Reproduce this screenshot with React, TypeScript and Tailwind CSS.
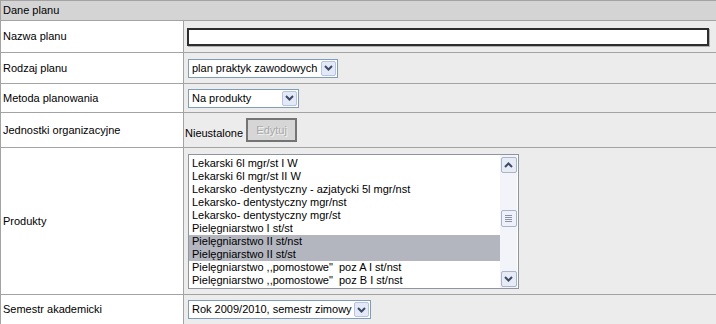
import React from "react";

const products = [
    "Lekarski 6l mgr/st I W",
    "Lekarski 6l mgr/st II W",
    "Lekarsko -dentystyczny - azjatycki 5l mgr/nst",
    "Lekarsko- dentystyczny mgr/nst",
    "Lekarsko- dentystyczny mgr/st",
    "Pielęgniarstwo I st/st",
    "Pielęgniarstwo II st/nst",
    "Pielęgniarstwo II st/st",
    "Pielęgniarstwo ,,pomostowe\"\u00a0 poz A I st/nst",
    "Pielęgniarstwo ,,pomostowe\"\u00a0 poz B I st/nst",
];

const selected = [6, 7];

const Chevron = ({ up = false }: { up?: boolean }) => (
    <svg width="9" height="6" viewBox="0 0 9 6" className={up ? "rotate-180" : ""}>
        <path d="M1 1 L4.5 4.5 L8 1" fill="none" stroke="#3b4a66" strokeWidth="2" />
    </svg>
);

const Select = ({ label, className }: { label: string; className: string }) => (
    <div className={`flex h-[19px] items-stretch border border-[#7f9db9] bg-white ${className}`}>
        <span className="flex-1 truncate pl-[3px] leading-[17px]">{label}</span>
        <span className="m-px flex w-[15px] items-center justify-center rounded-[2px] border border-[#b6c3dd] bg-[#e3e9f6]">
            <Chevron />
        </span>
    </div>
);

const Row = ({
    label,
    children,
    height,
}: {
    label: string;
    children: React.ReactNode;
    height: string;
}) => (
    <div className={`flex border-b border-[#a3a3a3] ${height}`}>
        <div className="flex w-[183px] shrink-0 items-center border-r border-[#a3a3a3] bg-white pl-[2px]">
            {label}
        </div>
        <div className="flex flex-1 items-center bg-[#ececec] pl-[1px]">{children}</div>
    </div>
);

const ScrollButton = ({ up = false }: { up?: boolean }) => (
    <div className="flex h-[16px] w-[16px] items-center justify-center rounded-[2px] border border-[#a9b4c8] bg-[#e6ebf5]">
        <Chevron up={up} />
    </div>
);

const ProductList = () => (
    <div className="ml-[3px] flex h-[135px] w-[331px] border border-[#8f959e] bg-white">
        <div className="flex-1 pt-[2px]">
            {products.map((p, i) => (
                <div
                    key={p}
                    className={`h-[13px] whitespace-nowrap pl-[3px] leading-[13px] ${
                        selected.includes(i) ? "bg-[#b3b5bf]" : ""
                    }`}
                >
                    {p}
                </div>
            ))}
        </div>
        <div className="mr-px flex w-[17px] flex-col items-center bg-[#f3f4fa] pt-[2px] pb-px">
            <ScrollButton up />
            <div className="flex flex-1 flex-col items-center pt-[37px]">
                <div className="flex h-[17px] w-[16px] flex-col items-center justify-center gap-px rounded-[2px] border border-[#a9b4c8] bg-[#eef1f9]">
                    <span className="h-px w-[7px] bg-[#8a93a6]" />
                    <span className="h-px w-[7px] bg-[#8a93a6]" />
                    <span className="h-px w-[7px] bg-[#8a93a6]" />
                    <span className="h-px w-[7px] bg-[#8a93a6]" />
                </div>
            </div>
            <ScrollButton />
        </div>
    </div>
);

const App = () => {
    return (
        <div
            className="h-[324px] w-[716px] overflow-hidden border-t border-l border-[#a3a3a3] bg-[#ececec] text-[11px] text-black"
            style={{ fontFamily: '"Liberation Sans", Arial, sans-serif' }}
        >
            <div className="flex h-[20px] items-center border-b border-[#a3a3a3] bg-[#d4d4d4] pl-[2px]">
                Dane planu
            </div>
            <Row label="Nazwa planu" height="h-[32px]">
                <div className="ml-[2px] h-[18px] w-[522px] border-2 border-[#2e2e2e] bg-white shadow-[1px_1px_0_#b0b0b0]" />
            </Row>
            <Row label="Rodzaj planu" height="h-[31px]">
                <Select label="plan praktyk zawodowych" className="ml-[3px] w-[150px]" />
            </Row>
            <Row label="Metoda planowania" height="h-[29px]">
                <Select label="Na produkty" className="ml-[3px] w-[111px]" />
            </Row>
            <Row label="Jednostki organizacyjne" height="h-[35px]">
                <div className="flex items-end">
                    <span className="mb-[1px]">Nieustalone</span>
                    <button
                        disabled
                        className="ml-[3px] h-[24px] w-[51px] border-2 border-[#747474] bg-[#d6d6d6] text-[11px] text-[#a9a9a9] [text-shadow:1px_1px_0_#f4f4f4]"
                    >
                        Edytuj
                    </button>
                </div>
            </Row>
            <Row label="Produkty" height="h-[147px]">
                <ProductList />
            </Row>
            <Row label="Semestr akademicki" height="h-[30px]">
                <Select label="Rok 2009/2010, semestr zimowy" className="ml-[3px] w-[183px]" />
            </Row>
        </div>
    );
};

export default App;
